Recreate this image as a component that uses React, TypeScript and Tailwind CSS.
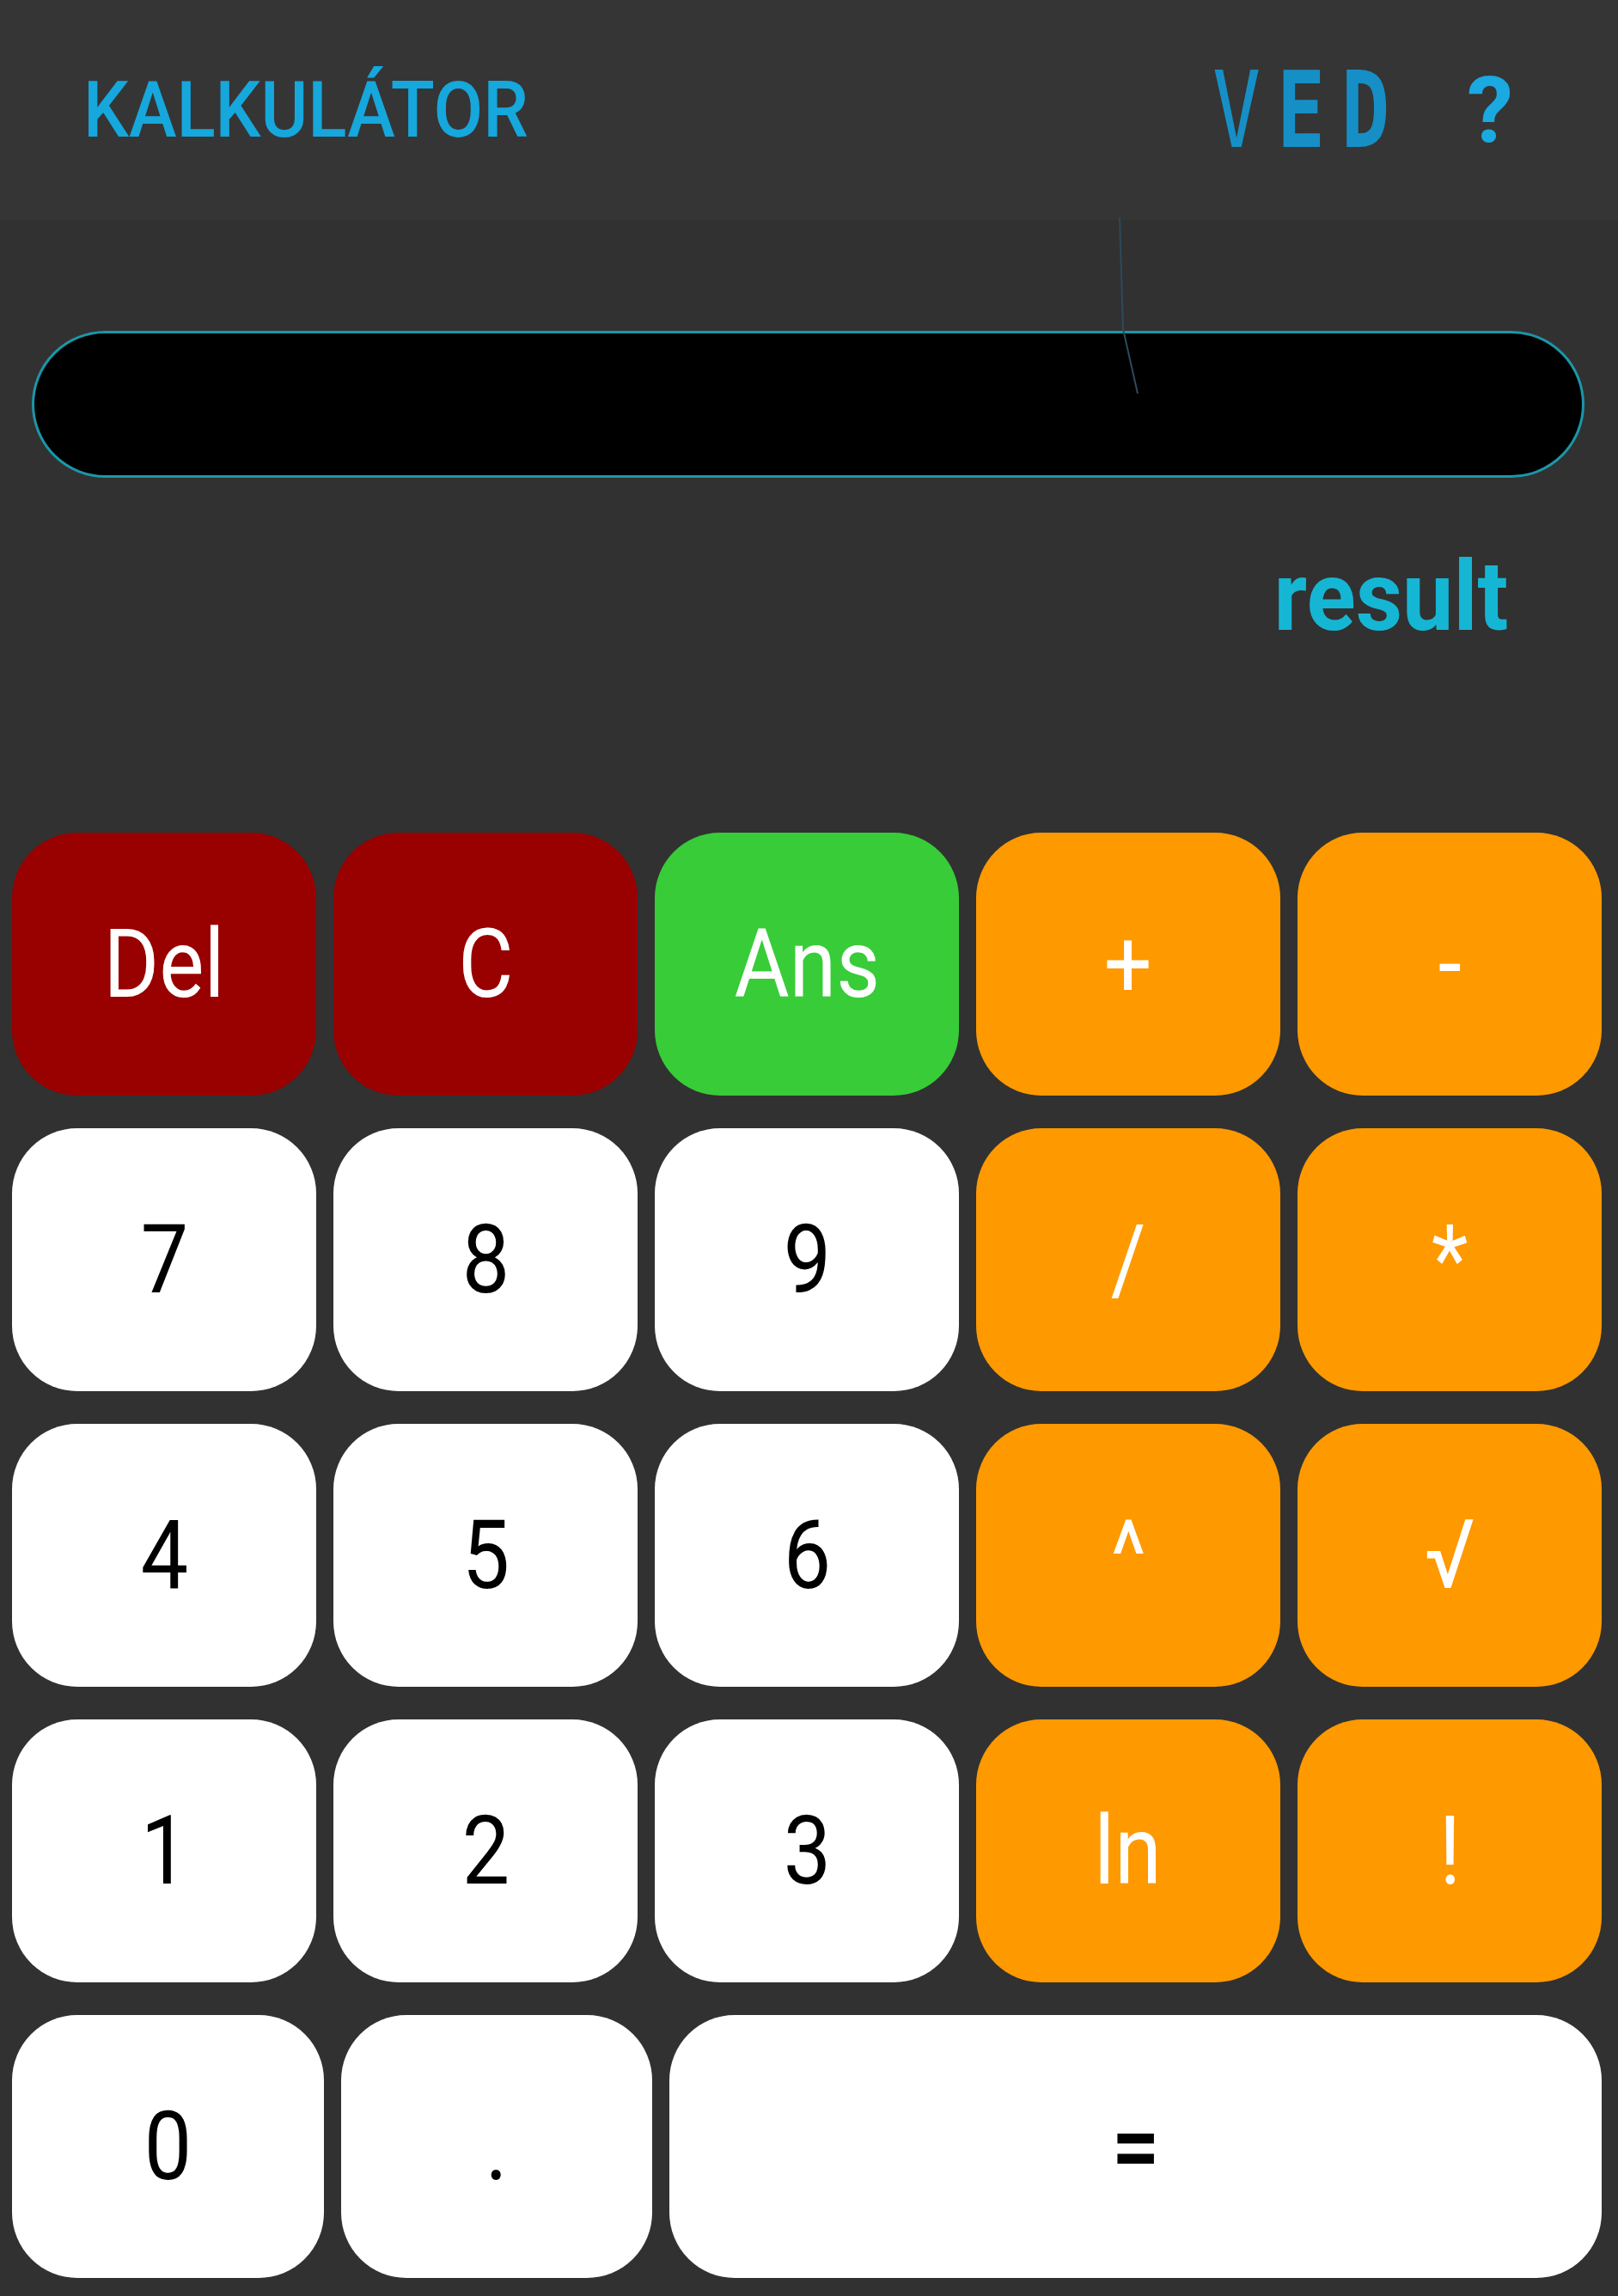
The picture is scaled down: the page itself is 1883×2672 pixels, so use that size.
import React from "react";

type Key = { label: string; tone: "red" | "green" | "orange" | "white"; bold?: boolean };

const rows: Key[][] = [
  [
    { label: "Del", tone: "red" },
    { label: "C", tone: "red" },
    { label: "Ans", tone: "green" },
    { label: "+", tone: "orange" },
    { label: "-", tone: "orange" },
  ],
  [
    { label: "7", tone: "white" },
    { label: "8", tone: "white" },
    { label: "9", tone: "white" },
    { label: "/", tone: "orange" },
    { label: "*", tone: "orange" },
  ],
  [
    { label: "4", tone: "white" },
    { label: "5", tone: "white" },
    { label: "6", tone: "white" },
    { label: "^", tone: "orange" },
    { label: "√", tone: "orange" },
  ],
  [
    { label: "1", tone: "white" },
    { label: "2", tone: "white" },
    { label: "3", tone: "white" },
    { label: "ln", tone: "orange" },
    { label: "!", tone: "orange" },
  ],
];

const toneClass: Record<Key["tone"], string> = {
  red: "bg-[#990000] text-white",
  green: "bg-[#38cc38] text-white",
  orange: "bg-[#ff9900] text-white",
  white: "bg-white text-black",
};

function Btn({ k, className = "" }: { k: Key; className?: string }) {
  return (
    <button
      className={`h-[306px] rounded-[76px] flex items-center justify-center ${toneClass[k.tone]} ${className}`}
    >
      <span
        className={`inline-block scale-x-[0.88] text-[112px] leading-none ${k.bold ? "font-semibold" : "font-normal"}`}
        style={{ fontFamily: '"Roboto", "Noto Sans", sans-serif' }}
      >
        {k.label}
      </span>
    </button>
  );
}

export default function App() {
  return (
    <div
      className="relative w-[1883px] h-[2672px] bg-[#313131] flex flex-col overflow-hidden"
      style={{ fontFamily: '"Roboto", "Noto Sans", sans-serif' }}
    >
      <header className="h-[256px] bg-[#353535] flex items-center justify-between pl-[97px] pr-[119px]">
        <span className="inline-block origin-left scale-x-[0.92] text-[91px] leading-none text-[#16a7dc] font-medium">
          KALKULÁTOR
        </span>
        <div className="flex items-center">
          {[
            { c: "V", w: "font-normal" },
            { c: "E", w: "font-bold" },
            { c: "D", w: "font-semibold" },
          ].map(({ c, w }) => (
            <span key={c} className="w-[75px] flex justify-center">
              <span
                className={`inline-block scale-x-[0.76] text-[123px] leading-none text-[#168fc6] ${w}`}
                style={{ fontFamily: '"DejaVu Sans Mono", "Liberation Mono", monospace' }}
              >
                {c}
              </span>
            </span>
          ))}
          <span className="ml-[77px] w-[60px] flex justify-center text-[108px] leading-none font-bold text-[#1aa9e0]">
            ?
          </span>
        </div>
      </header>

      <div className="pt-[129px] pl-[37px] pr-[39px]">
        <div className="h-[171px] rounded-full border-[3px] border-[#1a97a8] bg-black" />
      </div>

      <div className="flex justify-end pr-[128px] mt-[81px]">
        <span className="inline-block origin-right scale-x-[0.93] text-[114px] leading-none font-bold text-[#15b6d4]">
          result
        </span>
      </div>

      <div className="mt-[218px] px-[14px] pr-[19px] flex flex-col gap-y-[38px]">
        {rows.map((row, i) => (
          <div key={i} className="grid grid-cols-5 gap-x-[20px]">
            {row.map((k) => (
              <Btn key={k.label} k={k} />
            ))}
          </div>
        ))}
        <div className="flex gap-x-[20px]">
          <Btn k={{ label: "0", tone: "white" }} className="w-[363px]" />
          <Btn k={{ label: ".", tone: "white" }} className="w-[362px]" />
          <Btn k={{ label: "=", tone: "white", bold: true }} className="flex-1" />
        </div>
      </div>

      <svg
        className="absolute left-[1295px] top-[250px] pointer-events-none"
        width="40"
        height="215"
        viewBox="0 0 40 215"
      >
        <polyline points="8,3 12,133 29,208" fill="none" stroke="#2c4a5c" strokeWidth="2" />
      </svg>
    </div>
  );
}
